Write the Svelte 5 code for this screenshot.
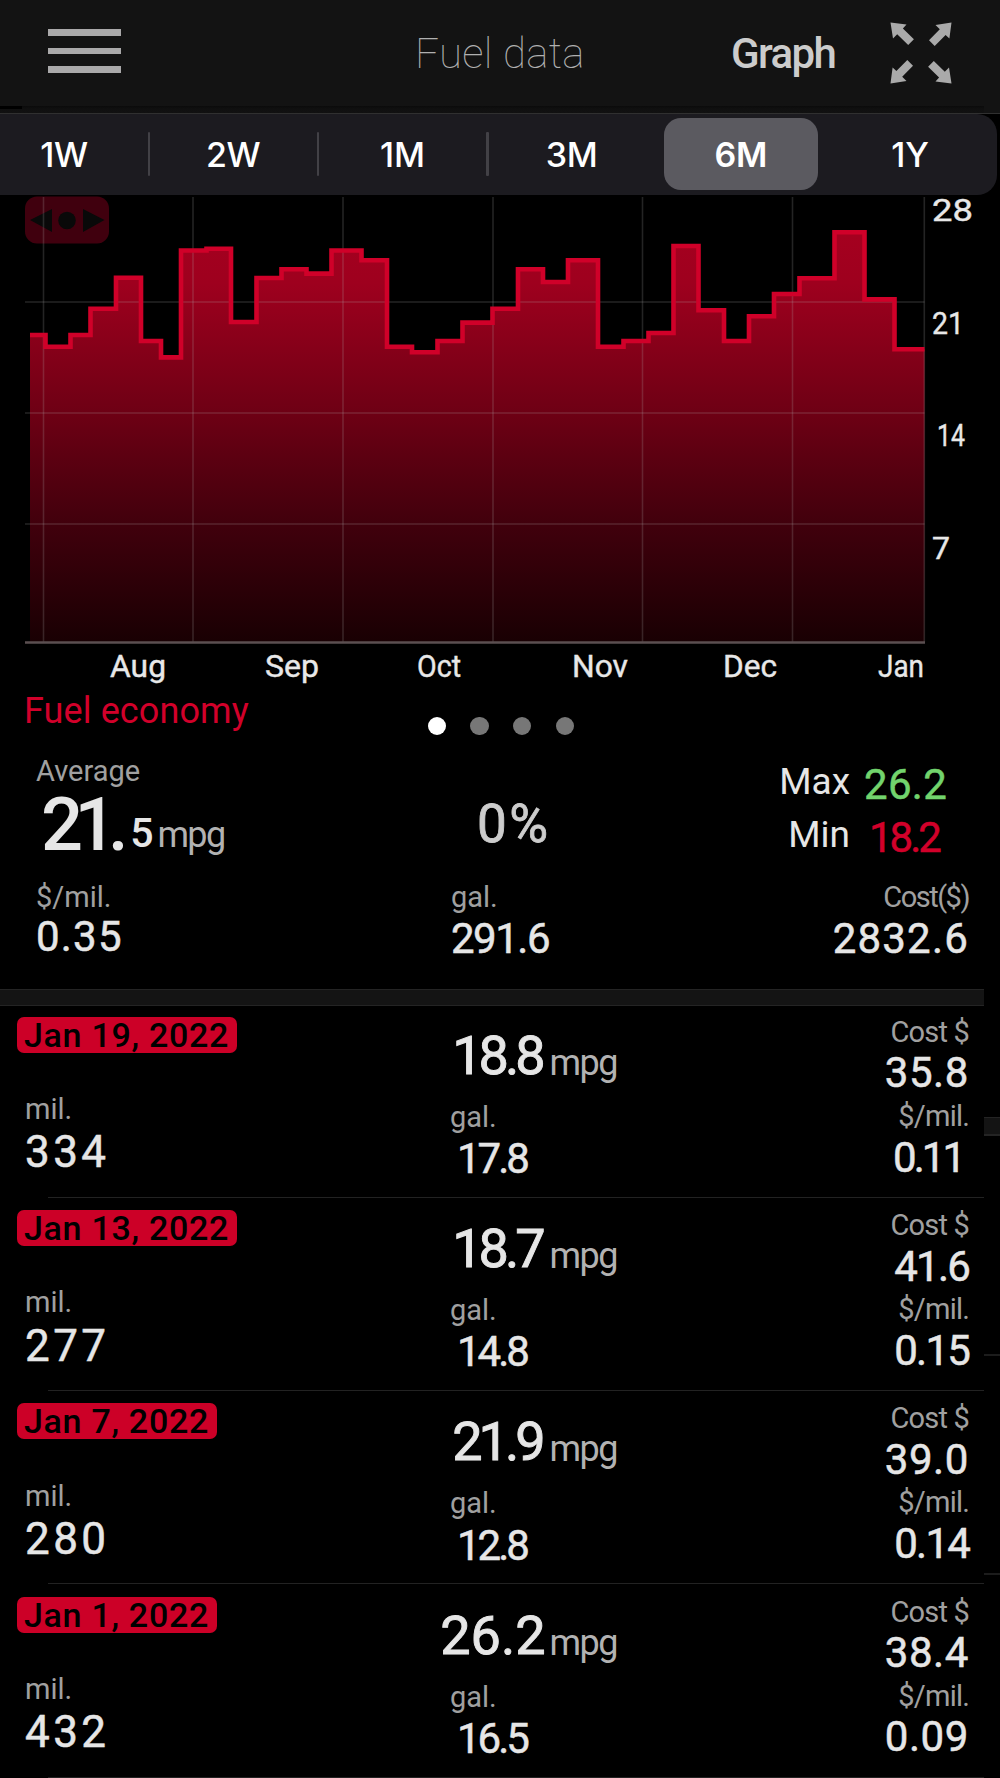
<script>
  const ranges = ['1W', '2W', '1M', '3M', '6M', '1Y'];
  let activeRange = '6M';
  let activePage = 0;

  const fills = [
    { date: 'Jan 19, 2022', mil: '334', mpg: '18.8', gal: '17.8', cost: '35.8', rate: '0.11' },
    { date: 'Jan 13, 2022', mil: '277', mpg: '18.7', gal: '14.8', cost: '41.6', rate: '0.15' },
    { date: 'Jan 7, 2022', mil: '280', mpg: '21.9', gal: '12.8', cost: '39.0', rate: '0.14' },
    { date: 'Jan 1, 2022', mil: '432', mpg: '26.2', gal: '16.5', cost: '38.4', rate: '0.09' },
  ];

  // numbers with a 1 in them are set tighter
  const hasOne = (v) => v.includes('1');

  // Step chart: [start x, level y], each level holds until the next start
  const chartTop = 196;
  const chartEnd = 924.5;
  const baseY = 642;
  const steps = [
    [30, 335], [45.5, 346.7], [70.5, 335], [90.5, 308.8], [116, 277.8], [141, 341],
    [161, 357.4], [181, 250.5], [206.5, 248.7], [231, 322], [256.5, 278], [281.5, 269.2],
    [306.5, 273.6], [331.5, 250.5], [361.5, 260.2], [387, 346.7], [412, 352.2], [437.5, 341],
    [462.5, 322.6], [492.5, 308.8], [518, 269.2], [543, 282], [568, 260.2], [598, 346.7],
    [623.5, 341], [648.5, 333], [673.5, 246], [698.5, 310.3], [724, 341], [749, 316.3],
    [774, 294], [799.5, 278.3], [834.5, 232.2], [864.5, 299.4], [894.5, 349.2],
  ];
  const gridX = [43.5, 193, 343, 493, 642.5, 792.5, 924.3];
  const gridY = [302, 413, 524];

  const months = [
    { label: 'Aug', x: 110, w: 56 },
    { label: 'Sep', x: 265, w: 54 },
    { label: 'Oct', x: 417, w: 44 },
    { label: 'Nov', x: 572, w: 56 },
    { label: 'Dec', x: 723, w: 54 },
    { label: 'Jan', x: 878, w: 46 },
  ];
  const levels = [
    { label: '28', x: 932, y: 220.5, w: 41 },
    { label: '21', x: 932, y: 333.5, w: 32 },
    { label: '14', x: 937, y: 446, w: 28 },
    { label: '7', x: 932, y: 559, w: 18 },
  ];

  $: line = steps
    .map(([x, y], i) => {
      const end = i + 1 < steps.length ? steps[i + 1][0] : chartEnd;
      return `${i ? 'L' : 'M'} ${x} ${y} H ${end}`;
    })
    .join(' ');
  $: area = `${line} V ${baseY} H ${steps[0][0]} Z`;
</script>

<div class="screen">
  <header>
    <button class="menu" aria-label="Menu"><i></i><i></i><i></i></button>
    <h1>Fuel data</h1>
    <span class="mode">Graph</span>
    <svg class="expand" width="62" height="62" viewBox="0 0 62 62">
      {#each [0, 90, 180, 270] as deg}
        <path transform="rotate({deg} 31 31)" d="M0.5 0.500 L16.5 2.6 L12.9 6.4 L23.9 17.3 L18.2 23 L7.2 12.2 L3 16.5 Z" />
      {/each}
    </svg>
  </header>

  <nav>
    {#each ranges as r}
      <button class:active={r === activeRange} on:click={() => (activeRange = r)}><span>{r}</span></button>
    {/each}
  </nav>

  <svg class="chart" width="1000" height="492" viewBox="0 {chartTop} 1000 492">
    <defs>
      <linearGradient id="fade" gradientUnits="userSpaceOnUse" x1="0" y1="230" x2="0" y2={baseY}>
        <stop offset="0" stop-color="#a5001f" />
        <stop offset="0.13" stop-color="#9e001e" />
        <stop offset="0.45" stop-color="#6d0014" />
        <stop offset="0.72" stop-color="#40000c" />
        <stop offset="1" stop-color="#190003" />
      </linearGradient>
    </defs>
    <rect x="25" y="196.5" width="84" height="47" rx="12" fill="#40000e" />
    <path d="M30 220 L52 209 V232 Z M104.500 220 L83 209 V232 Z" fill="#090909" />
    <circle cx="67" cy="220.500" r="8.8" fill="#090909" />
    <path d={area} fill="url(#fade)" />
    {#each gridX as x}
      <line x1={x} x2={x} y1="197" y2={baseY} class="grid" />
    {/each}
    {#each gridY as y}
      <line x1="25" x2="924.5" y1={y} y2={y} class="grid" />
    {/each}
    <path d={line} class="edge" />
    <line x1="25" x2="925" y1="642.5" y2="642.5" class="base" />
    {#each months as m}
      <text x={m.x} y="677" textLength={m.w} lengthAdjust="spacingAndGlyphs">{m.label}</text>
    {/each}
    {#each levels as l}
      <text x={l.x} y={l.y} textLength={l.w} lengthAdjust="spacingAndGlyphs">{l.label}</text>
    {/each}
  </svg>

  <div class="pager">
    <h2>Fuel economy</h2>
    <div class="dots">
      {#each [0, 1, 2, 3] as p}
        <i class:on={p === activePage}></i>
      {/each}
    </div>
  </div>

  <section class="summary">
    <div class="average">
      <span class="label">Average</span>
      <div class="big">21.<span class="dec">5</span><span class="unit">mpg</span></div>
    </div>
    <div class="change">0%</div>
    <dl>
      <dt>Max</dt><dd class="max">26.2</dd>
      <dt>Min</dt><dd class="min">18.2</dd>
    </dl>
  </section>

  <section class="totals">
    <div><span class="label">$/mil.</span><span class="value">0.35</span></div>
    <div><span class="label">gal.</span><span class="value low one">291.6</span></div>
    <div class="right"><span class="label">Cost($)</span><span class="value low">2832.6</span></div>
  </section>

  <div class="history">
    <div class="list">
      <div class="band"></div>
      {#each fills as f}
        <article>
          <div class="col-date">
            <span class="date">{f.date}</span>
            <span class="label">mil.</span>
            <span class="value">{f.mil}</span>
          </div>
          <div class="col-mid">
            <div class="economy"><span class:one={hasOne(f.mpg)}>{f.mpg}</span><span class="unit">mpg</span></div>
            <span class="label">gal.</span>
            <span class="value one">{f.gal}</span>
          </div>
          <div class="col-cost">
            <span class="label">Cost $</span>
            <span class="value" class:one={hasOne(f.cost)}>{f.cost}</span>
            <span class="label">$/mil.</span>
            <span class="value" class:one={hasOne(f.rate)} class:ends={f.rate.endsWith('1')}>{f.rate}</span>
          </div>
        </article>
      {/each}
    </div>
    <!-- sliver of the next page -->
    <div class="next">
      <div class="next-band"></div>
      <div class="next-row"></div>
      <div class="next-row"></div>
    </div>
  </div>
</div>

<style>
  :global(body) { background: #000; }
  .screen {
    width: 1000px;
    height: 1778px;
    overflow: hidden;
    background: #000;
    color: #e6e6e6;
    font-family: Roboto, "Liberation Sans", sans-serif;
  }
  button { background: none; border: 0; padding: 0; font: inherit; color: inherit; }
  h1, h2, dl, dd { margin: 0; font-weight: 400; }

  header {
    display: grid;
    grid-template-columns: 415px 316px 159px 1fr;
    box-sizing: border-box;
    height: 114px;
    background:
      linear-gradient(#000, #000) 0 106px / 22px 3px no-repeat,
      linear-gradient(#131313, #131313) 984px 106px / 16px 7px no-repeat,
      linear-gradient(#131313 106px, #0b0b0b 106px, #101010 109px, #111 113px, #303030 113px);
  }
  .menu {
    display: flex;
    flex-direction: column;
    gap: 12px;
    width: 73px;
    margin: 29px 0 0 48px;
  }
  .menu i { height: 6.6px; background: #aaa9aa; }
  h1 {
    margin-top: 29px;
    font-size: 42px;
    font-weight: 100;
    line-height: 50px;
    letter-spacing: 0.3px;
    color: #b0b0b0;
  }
  .mode {
    margin-top: 29px;
    font-size: 42px;
    font-weight: 500;
    line-height: 50px;
    letter-spacing: -1.6px;
    color: #ccc;
  }
  .expand { margin-top: 22px; fill: #aaa; }

  nav {
    display: grid;
    grid-template-columns: repeat(6, 169.2px);
    box-sizing: border-box;
    width: 1017px;
    height: 81px;
    margin-left: -20px;
    padding-top: 4px;
    border-radius: 20px;
    background: #1c1b20;
  }
  nav button {
    position: relative;
    height: 72px;
    font-family: Inter, "Liberation Sans", sans-serif;
    font-size: 34px;
    font-weight: 500;
    color: #fff;
  }
  nav span {
    display: block;
    width: 154px;
    height: 72px;
    margin: 0 7px;
    border-radius: 17px;
    line-height: 73px;
    letter-spacing: -0.3px;
  }
  nav .active span { background: #5b5a60; font-weight: 600; }
  nav button:nth-child(-n + 3)::after {
    content: '';
    position: absolute;
    top: 14px;
    right: -1px;
    width: 2.5px;
    height: 44px;
    border-radius: 1px;
    background: #424146;
  }

  .chart { display: block; margin-top: 1px; }
  .chart text { font-size: 32px; fill: #e8e8e8; stroke: #e8e8e8; stroke-width: 0.4px; }
  .grid { stroke: #b4b4b4; stroke-opacity: 0.2; stroke-width: 1.6; }
  .edge { fill: none; stroke: #d00029; stroke-width: 4.6; }
  .base { stroke: #5b4f51; stroke-width: 2.6; }

  .pager { display: grid; grid-template-columns: 427.5px 1fr; height: 60px; }
  h2 {
    margin-left: 24px;
    font-size: 36px;
    line-height: 46px;
    letter-spacing: 0.1px;
    color: #d2002a;
  }
  .dots { display: flex; gap: 24.3px; padding-top: 28.5px; }
  .dots i { width: 18.4px; height: 18.4px; border-radius: 50%; background: #777; }
  .dots .on { background: #fff; }

  .label {
    display: block;
    font-size: 29px;
    line-height: 30px;
    color: #a0a0a0;
  }
  .value {
    display: block;
    font-size: 42px;
    line-height: 42px;
    letter-spacing: 0.6px;
    -webkit-text-stroke: 0.5px;
  }
  .unit { font-size: 36px; color: #b2b2b2; letter-spacing: -1.5px; }

  .summary {
    display: grid;
    grid-template-columns: 441px 299px 1fr;
    height: 134px;
    padding-left: 36px;
  }
  .average { padding-top: 8px; }
  .big {
    height: 74px;
    margin: 2px 0 0 5px;
    font-size: 74px;
    font-weight: 500;
    line-height: 74px;
    letter-spacing: -8.5px;
    white-space: nowrap;
  }
  .big .dec { margin-left: 10px; font-size: 41px; letter-spacing: 0; position: relative; top: -3px; }
  .big .unit { margin-left: 4px; font-weight: 400; letter-spacing: -1.7px; position: relative; top: -3px; }
  .change {
    padding-top: 50px;
    font-size: 53px;
    line-height: 53px;
    letter-spacing: 2.5px;
    color: #ccc;
    -webkit-text-stroke: 0.8px;
  }
  dl {
    display: grid;
    grid-template-columns: 74px 1fr;
    grid-auto-rows: 53px;
    column-gap: 14px;
    padding-top: 13px;
    line-height: 42px;
  }
  dt { font-size: 37px; text-align: right; }
  dd { padding-top: 3px; font-size: 42px; letter-spacing: 0.3px; -webkit-text-stroke: 0.5px; }
  .max { color: #72d46d; }
  .min { color: #d2002a; padding-left: 5px; letter-spacing: -3px; }

  .totals {
    display: grid;
    grid-template-columns: 415px 300px 218px;
    height: 107.3px;
    padding-left: 36px;
  }
  .totals .value { margin-top: 4px; letter-spacing: 1.2px; }
  .totals .low { margin-top: 6px; }
  .totals .one { letter-spacing: -1.5px; }
  .totals .right { text-align: right; }
  .totals .right .label { letter-spacing: -1.5px; }

  .history { display: grid; grid-template-columns: 984px 16px; }
  .band {
    box-sizing: border-box;
    height: 17px;
    border: solid #242424;
    border-width: 1px 0;
    background: #141414;
  }
  article {
    display: grid;
    grid-template-columns: 440px 177px 352px;
    height: 193.3px;
    background: linear-gradient(#222, #222) 48px 100% / 936px 1.3px no-repeat;
  }
  article:nth-child(2) { margin-top: -1.7px; }
  .date {
    display: block;
    width: max-content;
    margin: 12px 0 41.3px 17px;
    padding: 0 8px 0 7px;
    border-radius: 7px;
    background: #cc0027;
    color: #000;
    font-size: 34px;
    font-weight: 500;
    line-height: 36px;
    letter-spacing: 0.7px;
  }
  .col-date .label, .col-date .value { margin-left: 25px; }
  .col-date .value { margin-top: 6.5px; font-size: 44px; line-height: 44px; letter-spacing: 3.4px; }
  .col-mid { padding-top: 24px; }
  .economy {
    height: 54px;
    margin-bottom: 19px;
    font-size: 54px;
    line-height: 54px;
    text-align: right;
    white-space: nowrap;
    -webkit-text-stroke: 0.9px;
  }
  .economy .one { letter-spacing: -4px; }
  .economy .one + .unit { margin-left: 8px; }
  .economy .unit { margin-left: 4px; -webkit-text-stroke: 0; position: relative; top: 1px; }
  .col-mid .label { margin-left: 10px; }
  .col-mid .value { margin: 6.3px 0 0 17px; letter-spacing: -3px; }
  .col-cost { padding: 12px 0 0; text-align: right; }
  .col-cost .label { letter-spacing: -0.8px; }
  .col-cost .label + .value { margin: 5.8px 0 6.4px; }
  .col-cost .one { letter-spacing: -1.8px; }
  .col-cost .ends { padding-right: 6px; letter-spacing: -3px; }

  .next-band {
    box-sizing: border-box;
    height: 19px;
    margin-top: 128px;
    border: solid #242424;
    border-width: 1px 0 2px;
    background: #141414;
  }
  .next-row { height: 217.5px; border-bottom: 2px solid #1c1c1c; }
</style>
